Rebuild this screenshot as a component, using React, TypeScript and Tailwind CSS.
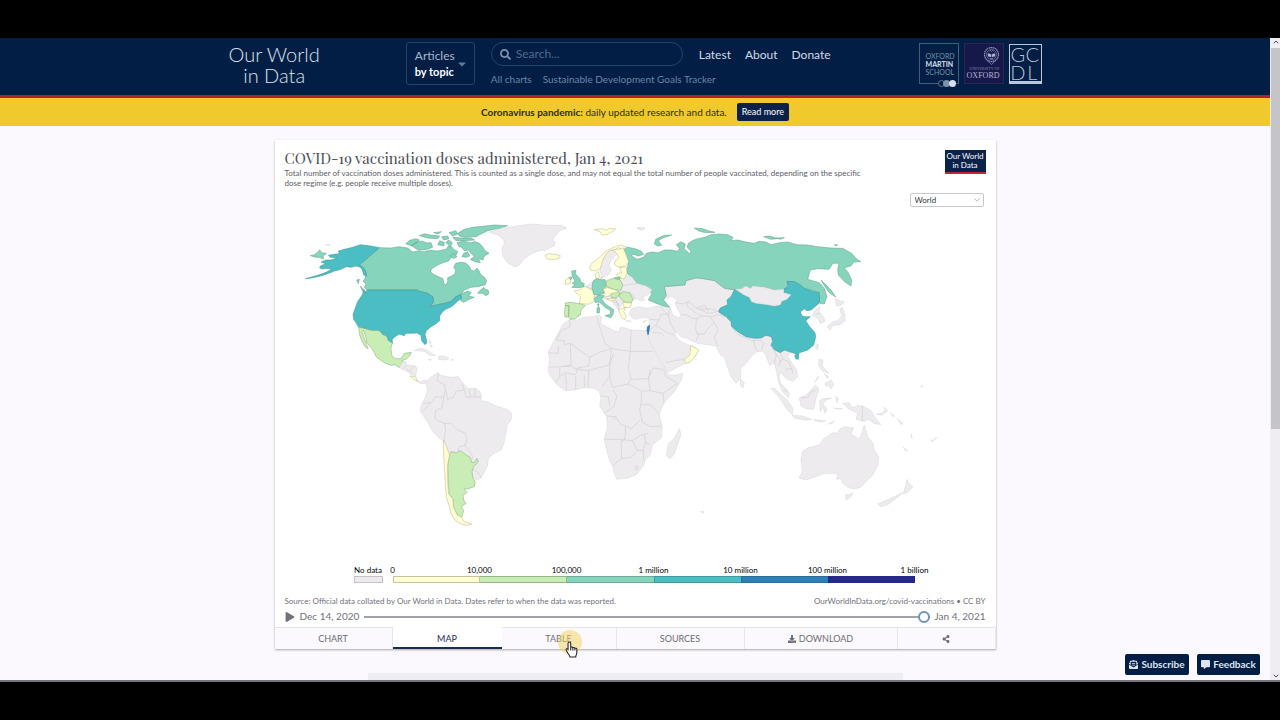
import { useState } from "react";
import type { ReactNode } from "react";
import { FaSearch, FaCaretDown, FaPlay, FaDownload, FaShareAlt, FaEnvelopeOpenText, FaCommentAlt } from "react-icons/fa";
import { ChevronDown } from "lucide-react";

type Bin = "none" | "b0" | "b1" | "b2" | "b3" | "b4";

interface Shape {
  bin: Bin;
  d: string;
}

interface Region {
  name: string;
  x: number;
  y: number;
  shapes: Shape[];
  borders?: string;
}

const FILLS: Record<Bin, string> = {
  none: "#edebee",
  b0: "#ffffd2",
  b1: "#c8edb5",
  b2: "#86d4bc",
  b3: "#4bbec4",
  b4: "#2c7fb8",
};

const STROKES: Record<Bin, string> = {
  none: "#d6d4d8",
  b0: "#b4b48e",
  b1: "#8aa57c",
  b2: "#5f9c89",
  b3: "#3a8f94",
  b4: "#256a97",
};

// Each region keeps its paths in local coordinates, shifted into the map by x / y
const REGIONS: Region[] = [
  {
    name: "North America", x: 48, y: 0,
    shapes: [
      { bin: "none", d: "M594 66L640 54 680 48 720 42 770 46 810 46 828 54 806 62 798 72 790 80 786 90 792 98 789 108 765 120 745 122 720 132 708 140 696 150 684 166 672 171 651 159 642 148 636 138 634 126 633 114 640 102 639 90 621 75Z" },
      { bin: "b2", d: "M265 113L300 114 325 110 350 114 365 126 385 122 400 125 415 121 440 123 465 118 472 108 482 110 490 120 500 124 495 136 480 142 474 152 456 158 440 165 422 176 418 186 430 194 440 199 456 206 458 220 464 225 470 216 470 203 480 199 492 192 494 180 488 172 494 160 510 157 524 159 536 170 540 181 550 183 558 174 564 182 568 192 580 202 587 212 583 224 560 230 540 232 520 240 511 252 508 258 492 262 480 274 465 279 440 284 418 290 428 275 425 260 410 250 385 244 378 240 228 240 220 232 225 222 216 213 222 205 226 190 218 176 205 165Z" },
      { bin: "b2", d: "M560 250L566 242 578 232 583 238 592 241 593 252 585 257 576 250ZM511 252L530 243 541 248 532 258 550 262 535 268 518 277 509 272ZM208 228L220 240 227 249 214 243ZM197 210L205 208 202 221Z" },
      { bin: "b2", d: "M362 106L372 98 392 93 408 99 420 98 425 112 405 119 380 119 370 113ZM344 101L356 91 375 86 385 90 378 98 362 108ZM385 77L400 71 418 75 446 78 440 86 410 84ZM428 68L451 65 441 72ZM500 70L520 58 545 52 575 49 610 45 650 47 625 55 590 62 570 72 555 80 520 82 505 78ZM485 82L510 84 540 84 551 90 520 92 495 92ZM474 68L495 62 500 72 485 78ZM440 104L446 92 460 97 458 108ZM464 97L474 90 484 98 478 110ZM452 80L470 78 474 86 458 90Z" },
      { bin: "b2", d: "M498 98L518 93 538 98 552 95 565 100 576 112 582 122 594 130 580 138 576 150 562 146 568 158 552 155 538 148 550 140 540 130 532 120 520 122 512 112 504 110ZM513 140L518 130 530 125 536 138 526 142ZM478 138L488 130 498 140 488 146Z" },
      { bin: "b2", d: "M58 137L70 134 78 128 86 119 92 128 106 130 96 138 98 147 85 142 74 142Z" },
      { bin: "none", d: "M104 104L118 103 112 107ZM414 390L420 396 418 402ZM418 404L424 408 422 413Z" },
      { bin: "b3", d: "M265 113L240 108 208 104 185 112 160 118 142 123 145 131 128 133 112 136 118 142 138 144 120 150 104 150 90 156 104 161 88 168 86 174 94 177 110 175 122 178 105 187 80 196 43 206 62 204 92 197 118 188 128 184 150 178 165 170 180 172 195 168 208 172 214 180 218 194 226 199 224 184 216 172 205 165Z" },
      { bin: "b3", d: "M228 240L378 240 385 244 410 250 425 260 428 275 418 290 440 284 465 279 480 274 492 262 508 253 512 265 500 273 488 285 478 292 464 298 454 306 446 318 446 332 434 342 420 350 406 362 402 374 406 388 408 398 402 404 392 392 390 376 378 369 362 370 345 370 340 377 325 372 312 380 304 388 304 400 292 393 286 377 275 376 265 362 240 362 215 354 203 352 196 340 188 328 186 314 192 296 200 275 214 254 218 240 224 250Z" },
      { bin: "b1", d: "M203 352L215 354 240 361 265 362 275 374 286 378 292 392 304 399 300 415 302 435 312 446 330 446 340 430 361 427 356 438 346 447 334 452 334 460 325 473 312 464 300 466 278 457 255 440 250 428 240 412 228 398 224 380 217 360 213 364 220 385 226 400 231 416 222 410 212 392 206 375Z" },
      { bin: "none", d: "M325 473L335 455 345 455 347 465 372 468 378 474 374 498 360 493 345 482ZM376 512L390 516 402 510 412 518 402 520 388 521ZM370 422L384 415 400 417 415 426 434 437 415 435 400 424ZM444 438L458 438 474 446 460 450 442 448ZM412 448L422 449 416 452ZM480 449L488 449 484 452Z" },
      { bin: "b0", d: "M357 498L374 500 380 514 368 508Z" },
    ],
    borders: "M345 465L338 476M372 468L356 482 347 478M356 482L362 492",
  },
  {
    name: "South America", x: 378, y: 390,
    shapes: [
      { bin: "none", d: "M74 128L85 115 98 106 112 98 116 106 130 108 150 112 172 110 178 118 190 135 202 146 222 144 234 152 242 165 240 182 262 186 276 194 290 200 318 208 332 220 332 236 318 256 314 285 308 312 300 330 275 342 262 356 260 376 250 396 240 414 228 420 212 410 190 430 150 400 140 340 128 304 112 292 98 278 82 250 66 226 57 212 62 192 74 172 80 150Z" },
      { bin: "b1", d: "M145 345L150 335 165 338 180 332 195 345 208 352 212 368 222 366 228 355 232 365 218 380 213 395 215 412 223 426 220 440 202 446 190 447 198 458 186 466 188 480 195 490 181 500 188 512 182 532 168 524 158 505 156 478 144 462 142 420 140 380Z" },
      { bin: "b0", d: "M128 300L136 318 142 335 146 345 140 372 139 420 143 462 156 478 157 500 168 524 182 532 190 545 212 552 200 556 182 553 162 540 150 520 144 495 136 472 133 430 130 380 128 340Z" },
    ],
    borders: "M112 100L108 122 130 134 134 150 128 172 124 202 104 212 102 236 112 244 128 248 134 262 130 300M128 172L104 170 90 188 66 190M90 188L64 216M134 150L140 178 158 172 164 154 190 150 184 132M190 150L196 172 214 170 240 172M204 146L208 170M222 144L222 168M128 250L150 250 168 268 192 280 198 296 192 316 176 320 168 338M192 316L204 332 212 342 216 358M216 388L232 398 240 412",
  },
  {
    name: "Africa", x: 768, y: 300,
    shapes: [
      { bin: "none", d: "M95 44L104 36 118 28 140 30 158 22 180 20 205 16 212 22 208 40 230 52 248 62 264 66 268 52 284 54 300 60 345 62 356 64 358 85 375 120 385 150 400 172 412 194 430 196 455 190 452 208 430 245 404 272 390 296 385 318 393 346 392 382 364 406 358 434 342 450 338 466 316 494 290 504 258 508 250 490 245 468 235 450 220 390 222 376 230 352 227 320 206 288 210 264 205 244 186 234 160 233 130 240 105 242 78 224 60 200 51 184 56 150 52 125 70 92Z" },
      { bin: "none", d: "M445 356L450 374 440 402 430 432 418 446 406 438 412 402 430 384Z" },
    ],
    borders: "M115 32L118 50 90 62 76 90 100 92 100 104 118 100 176 142 208 126 242 116 222 100 206 50 198 22M300 60L298 124 242 116 236 164 172 182 130 176 122 168 56 172M298 124L366 124M118 100L120 165 100 168M52 128L82 130 82 108M176 142L174 168 140 174 134 194 104 188 86 200M174 182L170 228M160 196L160 232M134 200L134 238M104 190L106 240M86 176L86 200 74 218M236 164L236 200 214 228M236 164L248 130M236 200L244 232 292 222 300 204 292 176 298 124M292 222L334 244 358 242 352 206 366 174 398 178M300 208L350 206M358 242L396 250 398 278M396 250L440 220M398 180L404 200 438 218M332 246L330 284 358 284 384 312M330 284L326 300 334 336 358 350 390 348M244 240L258 258 248 290 222 308M210 258L232 260 236 288M228 318L254 320 270 344 284 348 300 356 326 332M284 348L282 388 220 388M282 388L270 394 272 446 246 466M282 390L304 392 328 376 350 370M304 392L318 420 336 422 344 400 340 376M272 446L300 442 318 424M336 422L338 452M344 400L356 402M312 470L318 466 322 474 314 480ZM352 206L358 180M248 320L252 330",
  },
  {
    name: "Asia", x: 1068, y: 30,
    shapes: [
      { bin: "none", d: "M100 200L162 195 165 182 195 174 215 176 250 182 280 205 310 210 318 208 345 198 365 198 400 202 430 210 470 200 480 225 450 258 410 262 425 352 420 375 428 388 448 398 460 390 478 398 470 410 480 425 496 448 500 470 486 484 466 476 448 456 444 470 449 490 461 502 476 520 472 533 455 516 443 488 438 462 430 428 416 436 404 404 394 394 376 396 364 406 345 430 328 448 329 474 315 489 300 470 291 445 280 412 270 406 262 392 254 378 235 375 200 370 180 362 166 354 150 350 138 337 130 340 140 357 156 368 176 376 186 378 202 390 190 412 168 428 140 441 112 457 105 450 95 430 75 400 60 372 50 348 55 315 55 296 40 292 12 298 0 290 -6 282 2 266 20 260 50 265 78 258 100 258 118 264 126 286 145 294 150 284 137 262 132 248 142 242 120 228 108 236 104 226Z" },
      { bin: "b2", d: "M-24 84L-8 82 12 86 30 93 38 103 22 108 6 102 2 108 18 118 38 112 46 100 62 96 82 98 100 90 122 90 138 94 146 86 136 74 150 65 163 72 160 86 176 102 180 94 168 82 172 70 184 62 200 56 222 52 240 44 265 42 290 44 306 52 300 62 320 60 345 66 370 70 384 64 405 66 420 74 445 68 470 66 498 74 530 75 560 80 600 84 635 85 662 100 676 116 690 125 668 126 660 138 640 143 652 158 662 180 660 198 642 186 622 165 620 148 624 130 606 130 594 148 560 146 538 150 530 178 545 182 565 188 580 205 588 230 580 252 566 250 564 218 545 212 520 205 508 195 490 185 470 184 470 200 458 210 430 210 400 202 365 198 358 206 330 206 310 210 280 205 250 182 215 176 195 174 165 182 162 195 100 200 106 226 98 240 116 262 98 258 75 250 52 240 62 222 50 210 24 196 2 172 -12 160 -10 140 -8 125 -18 105Z" },
      { bin: "b2", d: "M570 180L580 190 600 210 614 231 595 218 582 200ZM70 72L74 58 100 46 122 45 95 54 82 62 92 76 80 78ZM190 24L215 26 232 32 252 37 226 38 205 34ZM398 50L415 48 440 56 420 58ZM436 54L460 53 448 58ZM610 74L620 74 616 78Z" },
      { bin: "b3", d: "M310 210L322 212 338 224 355 232 362 245 375 250 410 254 430 258 448 254 452 244 468 238 480 224 458 218 460 206 472 200 468 184 490 185 508 195 520 205 545 214 564 218 566 236 564 250 550 262 540 270 526 272 520 266 508 276 512 286 520 290 538 290 524 302 536 320 552 338 554 352 548 375 530 390 506 398 500 404 478 396 460 390 448 398 428 388 420 376 425 364 421 350 405 346 390 354 370 355 345 350 320 335 302 320 300 305 285 290 262 275 268 264 290 254 288 240 300 230Z" },
      { bin: "b3", d: "M491 406L503 402 502 418 494 416Z" },
      { bin: "none", d: "M314 208L332 206 345 198 358 206 365 198 400 202 430 210 458 208 458 218 480 224 468 238 452 244 448 254 430 258 410 254 375 250 362 245 355 232 338 224Z" },
      { bin: "none", d: "M543 286L552 272 566 260 564 276 576 288 582 304 568 310 562 296ZM588 320L604 306 622 302 632 286 626 266 634 262 642 286 642 302 626 314 606 316 598 330ZM614 236L622 240 640 246 630 256 616 258ZM555 376L562 372 560 390 554 386ZM328 476L340 490 336 504 328 496ZM18 24L42 25 30 30ZM35 304L46 301 40 308Z" },
      { bin: "b0", d: "M180 376L203 390 192 410 178 426 164 430 160 419 176 406Z" },
      { bin: "b4", d: "M49 320L56 315 54 335 51 345 48 332Z" },
    ],
    borders: "M132 248L158 252 172 244 196 264 206 268 238 266 262 275M150 284L166 284 184 294 196 296 194 330 202 344 196 362M196 296L214 288 238 290 262 284 288 292M238 290L250 308 226 330 222 342 198 342M250 308L262 330 250 352 262 378M172 244L168 258 196 280 214 288M196 264L222 256 232 274M206 268L232 280 256 276M118 264L112 284 90 282 84 300 56 298M90 262L100 274 112 284M84 300L74 316 96 330 112 340 128 344M112 284L118 310 134 336M74 316L56 330M64 336L90 340 100 350M104 428L130 422 160 418M130 346L128 344M302 320L320 344 368 362M368 362L372 384 382 394M368 362L388 360 398 370 392 388M420 376L430 392 436 404 430 430M436 404L448 420 444 440M448 398L456 418 472 424 482 446 486 462M456 418L444 426M462 448L484 446M458 510L470 514M556 282L568 280",
  },
  {
    name: "Europe", x: 768, y: 15,
    shapes: [
      { bin: "none", d: "M272 190L286 182 302 185 316 205 345 213 362 224 358 234 334 248 342 254 328 258 318 250 304 258 300 262 276 262 262 285 246 262 228 252 184 248 184 236 164 214 184 202 200 215 260 220 274 210Z" },
      { bin: "none", d: "M208 158L215 135 228 112 245 103 256 118 240 135 234 152 242 164 232 180 214 188 207 170Z" },
      { bin: "b0", d: "M42 120L52 116 72 118 88 122 84 130 65 134 48 132ZM190 44L215 41 225 46 235 40 254 42 245 50 238 52 230 58 214 60 206 50Z" },
      { bin: "b0", d: "M175 158L182 145 200 132 212 120 228 106 245 98 268 90 288 96 278 103 262 98 248 106 236 106 225 118 215 135 208 160 195 168 180 166ZM192 178L202 170 206 186 214 188 208 194 196 192Z" },
      { bin: "b0", d: "M244 104L268 102 276 98 284 116 293 140 284 152 262 156 250 148 252 138 264 128 256 114ZM266 158L286 156 288 175 280 192 264 188 256 180 262 174 272 174Z" },
      { bin: "b2", d: "M122 168L135 166 133 176 146 190 150 202 160 206 158 216 140 218 122 217 132 210 124 205 132 198 124 185ZM113 188L122 186 120 195ZM250 188L268 186 266 194 252 195Z" },
      { bin: "b0", d: "M104 195L113 188 119 196 118 206 102 208ZM130 228L148 224 152 218 164 214 188 228 190 240 188 260 172 268 145 265 148 245Z" },
      { bin: "b1", d: "M103 264L118 262 145 266 163 271 150 285 148 300 134 310 118 313 113 306 114 272 103 272ZM103 272L114 272 112 306 102 306 100 290Z" },
      { bin: "b2", d: "M186 198L198 190 210 194 222 194 226 214 216 222 222 234 202 240 188 238 183 218Z" },
      { bin: "b1", d: "M225 198L246 190 268 195 275 210 270 226 250 224 226 214ZM238 236L262 230 270 235 258 248 242 248ZM262 240L275 230 296 233 306 252 300 264 278 260Z" },
      { bin: "b0", d: "M216 222L230 218 250 224 264 230 240 236 238 242 220 246 202 242 222 234ZM275 262L302 264 298 277 280 278ZM262 284L284 278 278 290 286 304 282 314 272 308 268 298ZM226 252L240 250 256 252 250 256 238 256Z" },
      { bin: "b2", d: "M190 250L204 240 220 242 212 252 222 266 248 284 246 298 240 308 222 302 238 298 238 286 224 278 206 262 192 262ZM198 278L206 278 205 294 198 294ZM199 268L204 266 203 276Z" },
      { bin: "none", d: "M284 317L300 318 290 320ZM318 38L342 38 334 46Z" },
    ],
    borders: "M164 214L184 224M272 212L302 208 318 206M298 233L312 248M246 262L262 262 264 284M254 252L260 274",
  },
  {
    name: "Oceania", x: 1248, y: 300,
    shapes: [
      { bin: "none", d: "M335 424L350 414 385 405 398 386 412 378 425 368 438 370 448 356 462 350 488 354 480 372 505 388 512 370 520 345 530 380 545 400 550 420 563 440 560 465 545 495 520 520 508 532 490 537 470 532 455 520 450 506 436 508 442 494 430 490 400 490 370 502 345 510 324 504 334 485 330 450Z" },
      { bin: "none", d: "M463 554L474 554 486 548 478 562 466 570ZM648 508L656 524 666 530 650 546 636 552 640 540ZM634 548L622 560 590 584 568 590 560 582 600 565Z" },
      { bin: "none", d: "M455 280L475 278 480 290 490 292 500 285 520 290 542 304 550 320 570 344 548 340 532 328 520 334 495 328 500 310 475 298ZM556 312L572 310 586 298 576 292 590 302 572 316ZM598 308L610 318 606 320ZM618 326L636 340 630 344ZM660 372L664 384 660 382ZM636 410L650 424 644 422ZM720 390L728 390 724 396ZM730 386L738 383 732 389Z" },
      { bin: "none", d: "M325 264L345 256 360 240 374 226 384 238 376 260 368 298 345 296 330 288ZM240 235L252 236 272 256 288 270 306 296 304 314 288 298 265 262ZM303 316L335 318 362 328 345 331 312 325ZM386 272L396 266 422 264 402 272 396 282 408 298 402 310 396 290 388 304ZM370 328L384 331 404 332 390 336 372 332ZM412 342L430 332 424 340ZM434 260L442 266 438 278ZM428 294L454 296 440 298Z" },
      { bin: "none", d: "M384 148L396 150 394 168 406 182 414 190 400 186 390 178 383 166ZM400 192L414 200 408 206ZM402 220L420 210 428 224 420 236 412 226 404 228ZM372 216L382 198 380 206ZM28 604L40 605 34 610ZM690 227L696 230 690 231Z" },
    ],
    borders: "M514 288L514 334M330 264L350 262 362 244 376 240",
  },
];

function WorldMap() {
  return (
    <svg viewBox="0 0 2163 1050" className="block w-full" role="img" aria-label="World map of vaccination doses">
      {REGIONS.map((r) => (
        <g key={r.name} transform={`translate(${r.x} ${r.y})`} strokeLinejoin="round" strokeWidth={1.5}>
          {r.shapes.map((s, i) => (
            <path key={i} d={s.d} fill={FILLS[s.bin]} stroke={STROKES[s.bin]} />
          ))}
          {r.borders && <path d={r.borders} fill="none" stroke="#d0ced2" strokeWidth={2} />}
        </g>
      ))}
    </svg>
  );
}

const LEGEND_LABELS = ["0", "10,000", "100,000", "1 million", "10 million", "100 million", "1 billion"];

function Legend() {
  return (
    <div className="flex items-end gap-[10px] pl-[79px] pr-[81px] text-[8px] leading-[10px] text-black">
      <div className="w-[29px]">
        <div className="flex justify-center whitespace-nowrap">No data</div>
        <div className="mt-px h-[7px] border border-[#c4c2c6] bg-[#edebee]" />
      </div>
      <div className="flex-1">
        <div className="flex justify-between">
          {LEGEND_LABELS.map((l) => (
            <span key={l} className="flex w-0 justify-center whitespace-nowrap">{l}</span>
          ))}
        </div>
        <div className="mt-px grid h-[7px] grid-cols-6">
          <div className="border border-[#c4c4a0] bg-[#ffffd2]" />
          <div className="border-y border-r border-[#98b48a] bg-[#c8edb5]" />
          <div className="border-y border-[#6cad99] bg-[#86d4bc]" />
          <div className="border-y border-l border-[#3f9ba1] bg-[#4bbec4]" />
          <div className="border-y border-l border-[#286f9e] bg-[#2f80b5]" />
          <div className="bg-[#25288a]" />
        </div>
      </div>
    </div>
  );
}

function HandCursor() {
  return (
    <svg viewBox="0 0 24 32" className="absolute left-[63px] top-[13px] h-[17px] w-[13px]" aria-hidden="true">
      <path
        d="M8 2c1.700 0 2.500 1.200 2.500 2.600V12c.7-1 3.600-1 4 .8 1-.9 3.400-.6 3.800 1 1.500-.7 3.700 0 3.700 2V22c0 3-2 4.500-2 8H9c0-3-2.500-4.500-4-7.500L2 17c-.8-2 1.500-3.500 3.500-1.300V4.600C5.500 3.200 6.300 2 8 2zM10.500 12v6M14.500 13v5M18.300 14v4"
        fill="#fff"
        stroke="#222"
        strokeWidth="2"
      />
    </svg>
  );
}

const TABS: { id: string; label: ReactNode }[] = [
  { id: "chart", label: "CHART" },
  { id: "map", label: "MAP" },
  { id: "table", label: "TABLE" },
  { id: "sources", label: "SOURCES" },
  { id: "download", label: <><FaDownload className="size-2" />DOWNLOAD</> },
  { id: "share", label: <FaShareAlt className="size-2" aria-label="Share" /> },
];

function Tabs() {
  const [active, setActive] = useState("map");

  return (
    <div className="grid h-[22px] grid-cols-[118fr_109fr_115fr_128fr_153fr_98fr] text-[9px] text-[#6d6d76]">
      {TABS.map((t) => (
        <button
          key={t.id}
          type="button"
          onClick={() => setActive(t.id)}
          className={
            t.id === active
              ? "relative flex items-center justify-center border-b-2 border-[#1d2b52] bg-white pt-[4px] text-[#1d2b52]"
              : "relative flex items-center justify-center gap-[3px] border-r border-t border-[#e7e5ec] bg-[#fbf9fe]"
          }
        >
          {t.label}
          {t.id === "table" && (
            <>
              <span className="absolute left-[56px] top-[2px] size-6 rounded-full bg-[#f2d357]/50" />
              <HandCursor />
            </>
          )}
        </button>
      ))}
    </div>
  );
}

function ChartCard() {
  return (
    <section className="mx-auto mt-[14px] w-full max-w-[721px] bg-white shadow-[0_1px_2px_#00000055]">
      <div className="flex justify-between px-[10px] pt-[9px]">
        <div>
          <h1 className="font-['Playfair_Display','Liberation_Serif',serif] text-[15px] leading-[19px] text-[#4b4b55]">
            COVID-19 vaccination doses administered, Jan 4, 2021
          </h1>
          <p className="max-w-[610px] text-[8px] leading-[10px] text-[#5d5d66]">
            Total number of vaccination doses administered. This is counted as a single dose, and may not equal the
            total number of people vaccinated, depending on the specific<br />
            dose regime (e.g. people receive multiple doses).
          </p>
        </div>
        <a
          href="#home"
          className="mt-px h-6 w-[41px] shrink-0 whitespace-nowrap border-b-2 border-[#c0282d] bg-[#0a2149] pt-[2px] text-center text-[8px] leading-[9px] text-white"
        >
          Our World<br />in Data
        </a>
      </div>
      <div className="flex justify-end pr-3 pt-[5px]">
        <label className="relative flex items-center">
          <select
            aria-label="Region"
            className="h-[14px] w-[74px] appearance-none rounded-xs border border-[#c9c8ce] bg-white pl-1 text-[8px] leading-[12px] text-[#33333b]"
          >
            <option>World</option>
          </select>
          <ChevronDown className="pointer-events-none absolute right-[2px] size-[10px] text-[#aaaab0]" strokeWidth={2} />
        </label>
      </div>

      <div className="pt-[3px]">
        <WorldMap />
      </div>
      <div className="pt-[5px]">
        <Legend />
      </div>

      <div className="flex justify-between px-[10px] pt-[13px] text-[8px] leading-[10px] text-[#71717a]">
        <p>Source: Official data collated by Our World in Data. Dates refer to when the data was reported.</p>
        <p><a href="#vaccinations">OurWorldInData.org/covid-vaccinations</a> • <a href="#license">CC BY</a></p>
      </div>

      <div className="flex h-[21px] items-center px-[10px] text-[10px] text-[#71717a]">
        <button type="button" aria-label="Play" className="mr-[5px]">
          <FaPlay className="size-[10px]" />
        </button>
        <span>Dec 14, 2020</span>
        <input
          type="range"
          aria-label="Date"
          min={0}
          max={21}
          defaultValue={21}
          className="mx-[5px] h-3 min-w-0 flex-1 appearance-none bg-transparent
            [&::-webkit-slider-runnable-track]:h-[2px] [&::-webkit-slider-runnable-track]:bg-[#a3a2aa]
            [&::-webkit-slider-thumb]:-mt-[5px] [&::-webkit-slider-thumb]:size-3 [&::-webkit-slider-thumb]:appearance-none
            [&::-webkit-slider-thumb]:rounded-full [&::-webkit-slider-thumb]:border-2
            [&::-webkit-slider-thumb]:border-[#6f93bd] [&::-webkit-slider-thumb]:bg-white"
        />
        <span>Jan 4, 2021</span>
      </div>
      <Tabs />
    </section>
  );
}

function OxfordCrest() {
  return (
    <svg viewBox="0 0 34 40" className="h-5 w-[17px]" fill="none" stroke="#8f95bd" aria-hidden="true">
      <circle cx="17" cy="17" r="14" strokeWidth="2.500" strokeDasharray="3 1" />
      <circle cx="17" cy="17" r="10" strokeWidth="1.200" />
      <path d="M10 15l6 1.500V22l-6-1.500zM24 15l-6 1.500V22l6-1.500z" fill="#b6bbda" />
      <path d="M13 11l2-2 2 2 2-2 2 2M14 25h6M9 30l4 3 4 4 4-4 4-3" strokeWidth="1.500" />
    </svg>
  );
}

function PartnerLogos() {
  return (
    <div className="ml-auto flex gap-[5px] pt-[5px]">
      <a
        href="#martin"
        className="relative h-[41px] w-10 border border-[#3c6178] pl-[6px] pt-[8px] text-[7px] leading-[8px] text-[#7290a4]"
      >
        OXFORD<br /><b className="font-black text-[#c7d4e2]">MARTIN</b><br />SCHOOL
        <span className="absolute -bottom-[4px] right-[2px] flex">
          <span className="size-[7px] rounded-full border border-[#5c7c92] bg-[#021e45]" />
          <span className="-ml-[2px] size-[7px] rounded-full bg-[#7d93a8]" />
          <span className="-ml-px size-[7px] rounded-full bg-[#d5dfef]" />
        </span>
      </a>
      <a
        href="#oxford"
        className="flex h-[41px] w-10 flex-col items-end border border-[#29264f] bg-[#16184a] pr-[3px] pt-[2px] font-['Liberation_Serif',serif]"
      >
        <OxfordCrest />
        <span className="whitespace-nowrap text-[4px] leading-[6px] text-[#7f84ad]">UNIVERSITY OF</span>
        <span className="text-[8px] leading-[8px] text-[#b4b7d3]">OXFORD</span>
      </a>
      <a
        href="#gcdl"
        className="mt-px grid h-[40px] w-[33px] grid-cols-2 content-start justify-items-center border border-b-[3px] border-[#b9c6dc] px-px text-[20px] font-light leading-[18px] text-[#b9c6dc]"
      >
        <span>G</span><span>C</span><span>D</span><span>L</span>
      </a>
    </div>
  );
}

function Header() {
  return (
    <header className="border-b-[3px] border-[#b5202a] bg-[#021e45] px-4">
      <div className="mx-auto flex h-[57px] max-w-[813px]">
        <a href="#home" className="pt-[6px] text-center text-[20px] font-light leading-[21px] text-[#dce3ee]">
          Our World<br />in Data
        </a>
        <button
          type="button"
          className="ml-[86px] mt-[4px] flex h-[43px] w-[69px] items-center gap-px rounded-[3px] border border-[#26426b] pl-2 text-left text-[12px] leading-4 text-[#a9b7cc]"
        >
          <span className="whitespace-nowrap">Articles<br /><b className="text-[11px] text-white">by topic</b></span>
          <FaCaretDown className="size-3 text-[#62799b]" />
        </button>
        <div className="ml-4 pt-[4px]">
          <div className="flex items-center gap-4">
            <label className="flex h-6 w-[192px] items-center rounded-full border border-[#26426b] pl-2">
              <FaSearch className="size-[11px] shrink-0 text-[#7e93b2]" />
              <input
                type="search"
                aria-label="Search"
                placeholder="Search..."
                className="ml-[5px] w-full bg-transparent text-[12px] text-white outline-none placeholder:text-[#506a90]"
              />
            </label>
            <nav className="flex gap-[14px] pt-[2px] text-[12px] text-[#d2dae7]">
              <a href="#latest">Latest</a>
              <a href="#about">About</a>
              <a href="#donate">Donate</a>
            </nav>
          </div>
          <nav className="mt-[6px] flex gap-[11px] whitespace-nowrap text-[10px] leading-[14px] text-[#6d84a6]">
            <a href="#charts">All charts</a>
            <a href="#sdg">Sustainable Development Goals Tracker</a>
          </nav>
        </div>
        <PartnerLogos />
      </div>
    </header>
  );
}

export default function App() {
  return (
    <div className="flex h-screen flex-col bg-black py-[38px] font-['Lato',sans-serif]">
      <div className="flex min-h-0 flex-1 border-b-2 border-[#77757c] bg-[#fbf9fe]">
        <main className="relative min-w-0 flex-1 overflow-hidden">
          <Header />
          <div className="flex h-7 items-center justify-center gap-[10px] bg-[#f0c92c] text-[10px] text-[#2c2c2c]">
            <p><b>Coronavirus pandemic:</b> daily updated research and data.</p>
            <a href="#coronavirus" className="rounded-xs bg-[#0a2149] px-[5px] text-[9px] leading-[18px] text-white">
              Read more
            </a>
          </div>
          <ChartCard />
          <div className="mx-auto mt-6 h-12 max-w-[535px] bg-[#eeedf2]" />

          <div className="absolute bottom-[5px] right-[10px] flex gap-2 text-[10px] font-bold text-[#dfe5f0]">
            <button type="button" className="flex h-[21px] w-16 items-center justify-center gap-[3px] rounded-xs bg-[#021e45]">
              <FaEnvelopeOpenText className="size-[9px]" />Subscribe
            </button>
            <button type="button" className="flex h-[21px] w-[63px] items-center justify-center gap-[3px] rounded-xs bg-[#021e45]">
              <FaCommentAlt className="size-[9px]" />Feedback
            </button>
          </div>
        </main>
        <div className="flex w-[10px] flex-col items-center bg-[#efedf2] pl-px text-[#4c4b50]">
          <ChevronDown className="size-2 shrink-0 rotate-180" strokeWidth={3} />
          <div className="mt-[2px] w-full flex-[382] bg-[#c5c4c8]" />
          <div className="flex-[244]" />
          <ChevronDown className="size-2 shrink-0" strokeWidth={3} />
        </div>
      </div>
    </div>
  );
}
